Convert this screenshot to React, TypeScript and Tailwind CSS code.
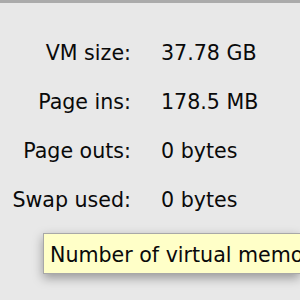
import React from "react";

const rows = [
  { label: "VM size:", value: "37.78 GB" },
  { label: "Page ins:", value: "178.5 MB" },
  { label: "Page outs:", value: "0 bytes" },
  { label: "Swap used:", value: "0 bytes" },
];

const App: React.FC = () => {
  return (
    <div className="relative w-[300px] h-[300px] overflow-hidden bg-[#e8e8e8] font-['DejaVu_Sans',sans-serif] text-[20.6px] leading-[24px] text-[#0a0a0a]">
      {/* TOP EDGE */}
      <div className="h-[3px] bg-[#ababab]" />

      {/* STATS */}
      <div className="mt-[38px] flex flex-col gap-[25px]">
        {rows.map((row) => (
          <div key={row.label} className="flex">
            <span className="w-[131px] text-right">{row.label}</span>
            <span className="ml-[30px] whitespace-nowrap">{row.value}</span>
          </div>
        ))}
      </div>

      {/* TOOLTIP */}
      <div className="absolute left-[43px] top-[233px] h-[41px] w-[257px] overflow-hidden border-y border-l border-[#a8a8a8] bg-[#ffffc8] pl-[6px] pt-[9px] whitespace-nowrap shadow-[0_4px_10px_rgba(0,0,0,0.35)]">
        Number of virtual memory
      </div>
    </div>
  );
};

export default App;
